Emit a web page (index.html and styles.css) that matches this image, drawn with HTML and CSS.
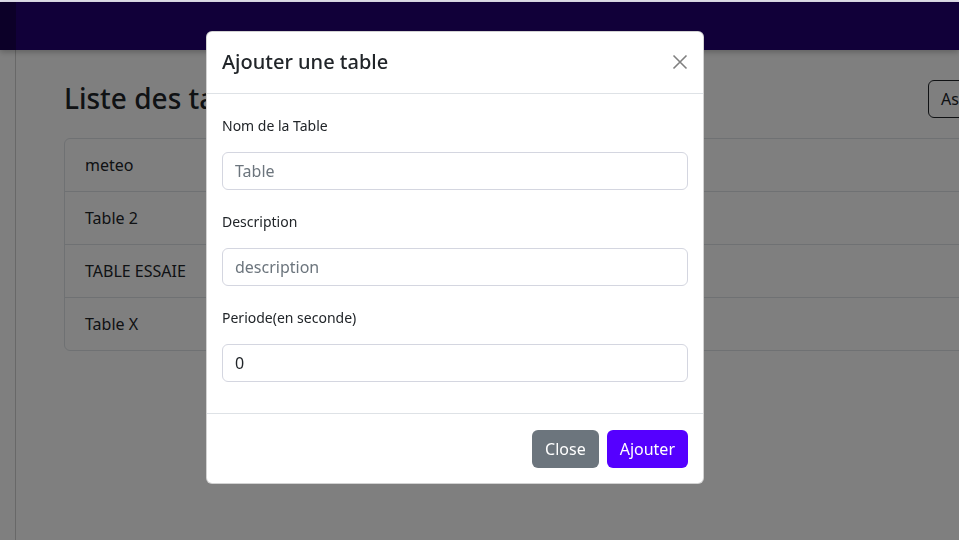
FILE: index.html
```html
<!DOCTYPE html>
<html lang="fr">
<head>
<meta charset="utf-8">
<title>Liste des tables</title>
<link rel="stylesheet" href="styles.css">
</head>
<body>
<div class="topstrip"></div>
<div class="app">
  <nav class="navbar">
    <div class="nav-side"></div>
    <div class="nav-main"></div>
  </nav>
  <div class="layout">
    <aside class="sidebar"></aside>
    <main class="content">
      <div class="page-head">
        <h2 class="page-title">Liste des tables</h2>
        <button class="btn btn-outline">Associer</button>
      </div>
      <ul class="list-group">
        <li class="list-item">meteo</li>
        <li class="list-item">Table 2</li>
        <li class="list-item">TABLE ESSAIE</li>
        <li class="list-item">Table X</li>
      </ul>
    </main>
  </div>
</div>

<div class="backdrop"></div>

<div class="modal">
  <div class="modal-header">
    <h5 class="modal-title">Ajouter une table</h5>
    <button class="btn-close" aria-label="Close">
      <svg width="16" height="16" viewBox="0 0 16 16"><path d="M1.5 1.5 L14.5 14.5 M14.5 1.5 L1.5 14.5" stroke="#808080" stroke-width="1.6" fill="none"/></svg>
    </button>
  </div>
  <div class="modal-body">
    <div class="form-group">
      <label class="form-label">Nom de la Table</label>
      <input class="form-control" type="text" placeholder="Table">
    </div>
    <div class="form-group">
      <label class="form-label">Description</label>
      <input class="form-control" type="text" placeholder="description">
    </div>
    <div class="form-group">
      <label class="form-label">Periode(en seconde)</label>
      <input class="form-control" type="text" value="0">
    </div>
  </div>
  <div class="modal-footer">
    <button class="btn btn-secondary">Close</button>
    <button class="btn btn-primary">Ajouter</button>
  </div>
</div>
</body>
</html>
```
FILE: styles.css
```css
* { box-sizing: border-box; }
html, body {
  margin: 0;
  padding: 0;
  width: 959px;
  height: 540px;
  overflow: hidden;
  background: #fff;
  font-family: "Noto Sans", "Open Sans", sans-serif;
  color: #212529;
}
.topstrip {
  height: 2px;
  background: #e2e0ec;
}
.app {
  height: 538px;
  display: flex;
  flex-direction: column;
}
.navbar {
  height: 48px;
  display: flex;
  flex-shrink: 0;
  box-shadow: 0 2px 6px rgba(0,0,0,0.25);
  position: relative;
  z-index: 1;
}
.nav-side {
  width: 16px;
  background: #180050;
}
.nav-main {
  flex: 1;
  background: #220072;
}
.layout {
  flex: 1;
  display: flex;
}
.sidebar {
  width: 16px;
  flex-shrink: 0;
  border-right: 1px solid #d0d0d0;
  background: #fff;
}
.content {
  padding: 30px 0 0 48px;
}
.page-head {
  display: flex;
  align-items: center;
  height: 38px;
  margin-bottom: 20px;
}
.page-title {
  flex: 0 0 864px;
  margin: 0;
  font-size: 28px;
  font-weight: 500;
  line-height: 1.2;
  white-space: nowrap;
}
.btn {
  font-family: inherit;
  font-size: 16px;
  line-height: 24px;
  padding: 6px 12px;
  border-radius: 6px;
  border: 1px solid transparent;
  white-space: nowrap;
  cursor: pointer;
}
.btn-outline {
  background: transparent;
  border-color: #212529;
  color: #212529;
}
.list-group {
  list-style: none;
  margin: 0;
  padding: 0;
  width: 960px;
  border: 1px solid #dee2e6;
  border-radius: 6px;
}
.list-item {
  height: 53px;
  padding: 0 20px;
  display: flex;
  align-items: center;
  font-size: 16px;
  border-bottom: 1px solid #dee2e6;
}
.list-item:last-child { border-bottom: 0; height: 52px; }

.backdrop {
  position: fixed;
  left: 0;
  right: 0;
  top: 2px;
  bottom: 0;
  background: rgba(0,0,0,0.5);
  z-index: 10;
}
.modal {
  position: absolute;
  left: 206px;
  top: 31px;
  width: 498px;
  background: #fff;
  border: 1px solid rgba(0,0,0,0.175);
  border-radius: 6px;
  z-index: 20;
  display: flex;
  flex-direction: column;
}
.modal-header {
  display: flex;
  align-items: center;
  justify-content: space-between;
  padding: 15px 15px 16px 15px;
  border-bottom: 1px solid #dee2e6;
}
.modal-title {
  margin: 0;
  font-size: 20px;
  font-weight: 500;
  line-height: 30px;
}
.btn-close {
  background: none;
  border: 0;
  padding: 0;
  width: 16px;
  height: 16px;
  display: flex;
}
.modal-body {
  padding: 16px 15px 16px 15px;
}
.form-group {
  margin-bottom: 16px;
}
.form-group:last-child { margin-bottom: 15px; }
.form-label {
  display: block;
  padding-top: 5px;
  font-size: 14px;
  line-height: 21px;
  margin-bottom: 16px;
}
.form-control {
  display: block;
  width: 100%;
  height: 38px;
  padding: 6px 12px;
  font-family: inherit;
  font-size: 16px;
  line-height: 24px;
  color: #212529;
  border: 1px solid #d4d6e0;
  border-radius: 6px;
  background: #fff;
  outline: none;
}
.form-control::placeholder { color: #6c757d; }
.modal-footer {
  display: flex;
  justify-content: flex-end;
  gap: 8px;
  padding: 16px 15px 15px 15px;
  border-top: 1px solid #dee2e6;
}
.btn-secondary {
  background: #6c757d;
  color: #fff;
}
.btn-primary {
  background: #5500ff;
  color: #fff;
}
```
